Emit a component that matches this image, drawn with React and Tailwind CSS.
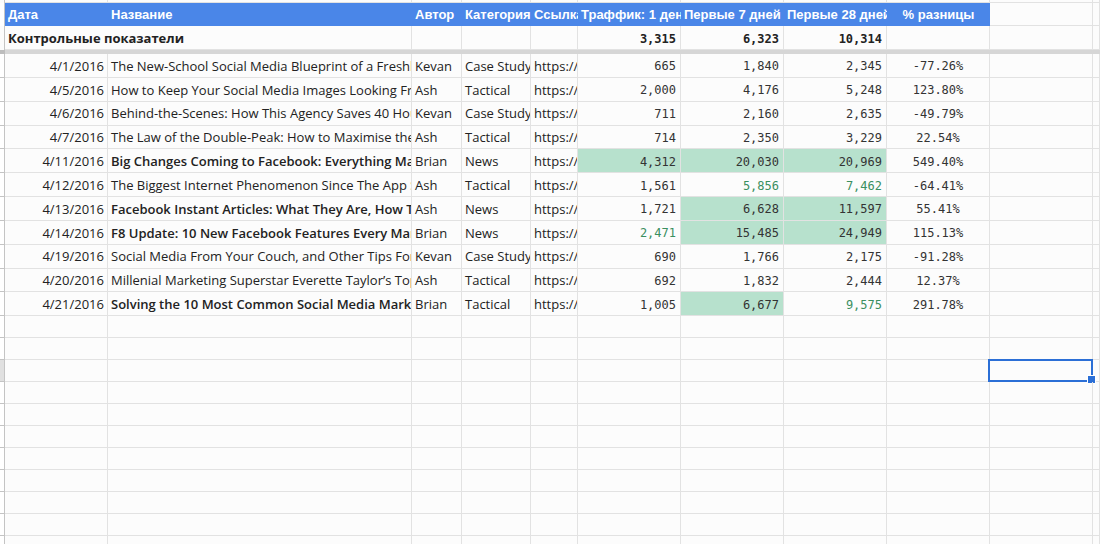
import React from 'react';

const rows = [
  { date: '4/1/2016', title: 'The New-School Social Media Blueprint of a Freshly Funded Startup', author: 'Kevan', cat: 'Case Study', d1: '665', d7: '1,840', d28: '2,345', diff: '-77.26%' },
  { date: '4/5/2016', title: 'How to Keep Your Social Media Images Looking Fresh', author: 'Ash', cat: 'Tactical', d1: '2,000', d7: '4,176', d28: '5,248', diff: '123.80%' },
  { date: '4/6/2016', title: 'Behind-the-Scenes: How This Agency Saves 40 Hours a Week', author: 'Kevan', cat: 'Case Study', d1: '711', d7: '2,160', d28: '2,635', diff: '-49.79%' },
  { date: '4/7/2016', title: 'The Law of the Double-Peak: How to Maximise the Lifespan of Content', author: 'Ash', cat: 'Tactical', d1: '714', d7: '2,350', d28: '3,229', diff: '22.54%' },
  { date: '4/11/2016', title: 'Big Changes Coming to Facebook: Everything Marketers Need to Know', author: 'Brian', cat: 'News', d1: '4,312', d7: '20,030', d28: '20,969', diff: '549.40%', bold: true, s1: 'bg', s7: 'bg', s28: 'bg' },
  { date: '4/12/2016', title: 'The Biggest Internet Phenomenon Since The App Store', author: 'Ash', cat: 'Tactical', d1: '1,561', d7: '5,856', d28: '7,462', diff: '-64.41%', s7: 'txt', s28: 'txt' },
  { date: '4/13/2016', title: 'Facebook Instant Articles: What They Are, How They Work', author: 'Ash', cat: 'News', d1: '1,721', d7: '6,628', d28: '11,597', diff: '55.41%', bold: true, s7: 'bg', s28: 'bg' },
  { date: '4/14/2016', title: 'F8 Update: 10 New Facebook Features Every Marketer Should Know', author: 'Brian', cat: 'News', d1: '2,471', d7: '15,485', d28: '24,949', diff: '115.13%', bold: true, s1: 'txt', s7: 'bg', s28: 'bg' },
  { date: '4/19/2016', title: 'Social Media From Your Couch, and Other Tips For Working Remotely', author: 'Kevan', cat: 'Case Study', d1: '690', d7: '1,766', d28: '2,175', diff: '-91.28%' },
  { date: '4/20/2016', title: 'Millenial Marketing Superstar Everette Taylor\u2019s Top Tips', author: 'Ash', cat: 'Tactical', d1: '692', d7: '1,832', d28: '2,444', diff: '12.37%' },
  { date: '4/21/2016', title: 'Solving the 10 Most Common Social Media Marketing Problems', author: 'Brian', cat: 'Tactical', d1: '1,005', d7: '6,677', d28: '9,575', diff: '291.78%', bold: true, s7: 'bg', s28: 'txt' },
];

const grid = 'grid grid-cols-[5px_103px_304px_50px_69px_47px_103px_103px_103px_103px_103px_1fr]';
const cell = 'border-r border-b border-[#e2e2e2] overflow-hidden whitespace-nowrap flex items-center';
const sans = "font-['Open_Sans',sans-serif] text-[13px] text-[#222] pt-[2px]";
const mono = "font-['DejaVu_Sans_Mono',monospace] text-[12px] pt-[2px]";
const head = "bg-[#4a86e8] overflow-hidden whitespace-nowrap flex items-center font-['Liberation_Sans',sans-serif] font-bold text-[13px] text-white";

function NumCell({ value, mark }) {
  const tone = mark === 'bg' ? 'bg-[#b7e1cd] text-[#333]' : mark === 'txt' ? 'text-[#3a8f5f]' : 'text-[#333]';
  return <div className={`${cell} ${mono} ${tone} justify-end pr-[4px]`}>{value}</div>;
}

function Empty({ cols = 10 }) {
  return Array.from({ length: cols }).map((_, i) => <div key={i} className={cell} />);
}

export default function App() {
  return (
    <div className="w-[1100px] h-[544px] overflow-hidden bg-[#fcfcfc]">
      {/* partial row at top */}
      <div className={`${grid} h-[3px]`}>
        <div className="border-r border-[#c4c4c4]" />
        <Empty cols={11} />
      </div>

      {/* Header */}
      <div className={`${grid} h-[23px]`}>
        <div className="border-r border-[#c4c4c4] bg-white" />
        {['Дата', 'Название', 'Автор', 'Категория', 'Ссылка', 'Траффик: 1 день', 'Первые 7 дней', 'Первые 28 дней'].map(h => (
          <div key={h} className={`${head} pl-[3px]`}>{h}</div>
        ))}
        <div className={`${head} justify-center`}>% разницы</div>
        <div className={cell} />
        <div className={cell} />
      </div>

      {/* Control row */}
      <div className={`${grid} h-[24px]`}>
        <div className="border-r border-[#c4c4c4]" />
        <div className={`${cell} col-span-2 pl-[3px] pt-[3px] font-['Open_Sans',sans-serif] font-bold text-[13px] text-[#222]`}>
          Контрольные показатели
        </div>
        <div className={cell} />
        <div className={cell} />
        <div className={cell} />
        <div className={`${cell} ${mono} font-bold text-[#222] justify-end pr-[4px]`}>3,315</div>
        <div className={`${cell} ${mono} font-bold text-[#222] justify-end pr-[4px]`}>6,323</div>
        <div className={`${cell} ${mono} font-bold text-[#222] justify-end pr-[4px]`}>10,314</div>
        <div className={cell} />
        <div className={cell} />
        <div className={cell} />
      </div>

      {/* Freeze bar */}
      <div className="flex h-[4px]">
        <div className="w-[5px] bg-[#bdbdbd]" />
        <div className="flex-1 bg-[#d6d6d6]" />
      </div>

      {/* Data */}
      {rows.map(r => (
        <div key={r.date} className={`${grid} h-[23.85px]`}>
          <div className="border-r border-b border-[#c4c4c4] bg-white" />
          <div className={`${cell} ${sans} justify-end pr-[3px]`}>{r.date}</div>
          <div className={`${cell} ${sans} pl-[3px] ${r.bold ? 'font-semibold text-[#111]' : ''}`}>{r.title}</div>
          <div className={`${cell} ${sans} pl-[3px]`}>{r.author}</div>
          <div className={`${cell} ${sans} pl-[3px]`}>{r.cat}</div>
          <div className={`${cell} ${sans} pl-[3px]`}>https://blog.bufferapp.com</div>
          <NumCell value={r.d1} mark={r.s1} />
          <NumCell value={r.d7} mark={r.s7} />
          <NumCell value={r.d28} mark={r.s28} />
          <div className={`${cell} ${mono} text-[#333] justify-center`}>{r.diff}</div>
          <div className={cell} />
          <div className={cell} />
        </div>
      ))}

      {/* Empty rows */}
      {Array.from({ length: 11 }).map((_, i) => (
        <div key={i} className={`${grid} h-[22px]`}>
          <div className={`border-r border-b border-[#c4c4c4] ${i === 2 ? 'bg-[#e0e0e0]' : 'bg-white'}`} />
          <Empty cols={9} />
          <div className="relative z-10 border-r border-b border-[#e2e2e2]">
            {i === 2 && (
              <>
                <div className="absolute -left-[2px] -top-[1px] w-[105px] h-[23px] border-2 border-[#2b6fd6]" />
                <div className="absolute left-[97px] top-[15px] w-[9px] h-[9px] bg-[#2b6fd6] border border-white" />
              </>
            )}
          </div>
          <div className={cell} />
        </div>
      ))}
    </div>
  );
}
